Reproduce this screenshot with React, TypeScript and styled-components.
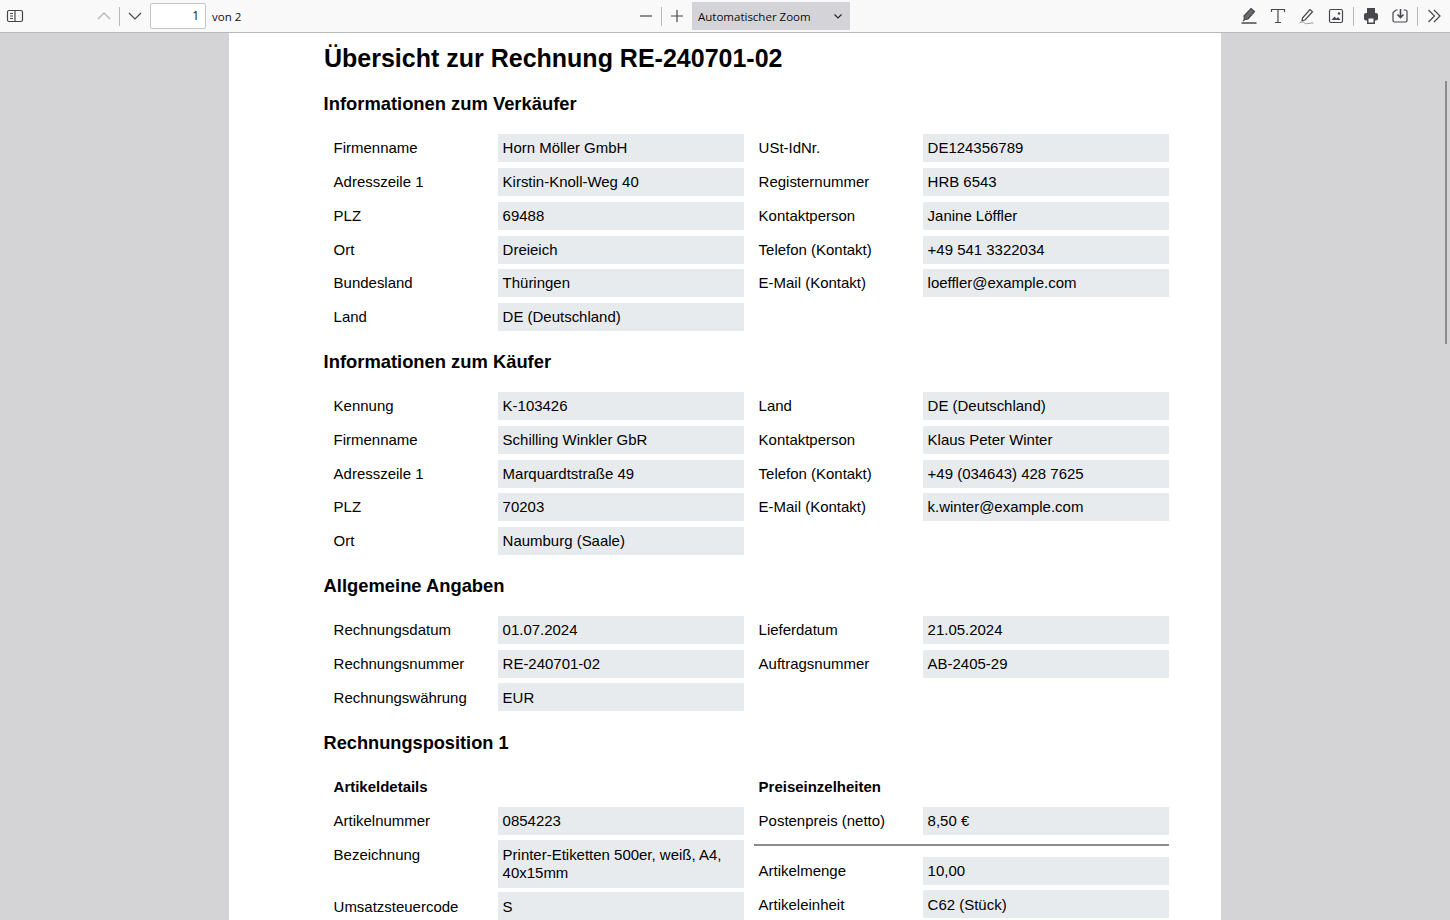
import { Fragment } from "react";
import styled, { createGlobalStyle } from "styled-components";

const GlobalStyle = createGlobalStyle`
  html, body {
    margin: 0;
    padding: 0;
    height: 100%;
    overflow: hidden;
    background: #d4d4d7;
  }
`

const Viewer = styled.div`
  position: relative;
  height: 920px;
  overflow: hidden;
  display: flex;
  flex-direction: column;
  background: #d4d4d7;
`

const Toolbar = styled.div`
  height: 32px;
  flex: none;
  display: flex;
  align-items: center;
  background: #f9f9fa;
  border-bottom: 1px solid #b8b8b8;
  font-family: "Open Sans", "Noto Sans", sans-serif;
  font-size: 11.5px;
  color: #0c0c0d;
`

const LeftGroup = styled.div`
  width: 632px;
  flex: none;
  display: flex;
  align-items: center;
  padding-left: 1px;
  box-sizing: border-box;
`

const CenterGroup = styled.div`
  display: flex;
  align-items: center;
`

const RightGroup = styled.div`
  margin-left: auto;
  margin-right: 2px;
  display: flex;
  align-items: center;
  gap: 1px;
`

const ToolButton = styled.div<{ $after?: number }>`
  width: 28px;
  height: 24px;
  flex: none;
  display: flex;
  align-items: center;
  justify-content: center;
  margin-right: ${(p) => p.$after ?? 0}px;
  svg {
    display: block;
  }
`

const Separator = styled.div<{ $left?: number; $right?: number }>`
  width: 1px;
  height: 19px;
  flex: none;
  background: #b9b9ba;
  margin: 0 ${(p) => p.$right ?? 1}px 0 ${(p) => p.$left ?? 1}px;
`

const PageInput = styled.div`
  width: 56px;
  height: 26px;
  box-sizing: border-box;
  margin-left: 1px;
  padding-right: 6px;
  border: 1px solid #c4c4c4;
  border-radius: 2px;
  background: #fff;
  text-align: right;
  line-height: 24px;
  font-size: 12px;
`

const PageCount = styled.span`
  margin-left: 6px;
`

const ZoomSelect = styled.div`
  width: 158px;
  height: 28px;
  box-sizing: border-box;
  margin-left: 1px;
  padding: 0 4px 0 6px;
  display: flex;
  align-items: center;
  justify-content: space-between;
  background: #d4d4d8;
`

const Page = styled.div`
  width: 992px;
  margin-left: 229px;
  flex: 1;
  box-sizing: border-box;
  padding: 0 52px 0 95px;
  background: #fff;
  color: #000;
  font-family: "Liberation Sans", Arial, sans-serif;
  font-size: 14.97px;
  line-height: 18px;
  overflow: hidden;
`

const Title = styled.h1`
  margin: 8px 0 0;
  font-size: 25px;
  line-height: 34px;
  font-weight: 700;
`

const SectionHeading = styled.h2<{ $top: number; $after?: number; $size?: number }>`
  margin: ${(p) => p.$top}px 0 ${(p) => p.$after ?? 19}px -0.4px;
  font-size: ${(p) => p.$size ?? 18.36}px;
  line-height: 22px;
  font-weight: 700;
`

const FieldGrid = styled.div`
  margin-left: 5px;
  display: grid;
  grid-template-columns: 169px 246px 10px 169px 246px;
  grid-auto-rows: minmax(28px, auto);
  row-gap: 5.75px;
`

const PositionColumns = styled.div`
  margin-left: 5px;
  display: grid;
  grid-template-columns: 415px 415px;
  column-gap: 10px;
  align-items: start;
`

const PositionColumn = styled.div<{ $gap: number }>`
  display: grid;
  grid-template-columns: 169px 246px;
  grid-auto-rows: auto;
  row-gap: ${(p) => p.$gap}px;
`

const SubHeading = styled.div<{ $after: number }>`
  grid-column: 1 / 3;
  height: 20px;
  margin-bottom: ${(p) => p.$after}px;
  padding-left: 4.6px;
  font-weight: 700;
  line-height: 20px;
`

const Label = styled.div<{ $col?: number; $top?: number }>`
  grid-column: ${(p) => p.$col ?? "auto"};
  padding: ${(p) => p.$top ?? 5.2}px 5px 0 4.6px;
`

const Value = styled.div<{ $col?: number; $top?: number; $bottom?: number }>`
  grid-column: ${(p) => p.$col ?? "auto"};
  min-height: 28px;
  padding: ${(p) => p.$top ?? 5.2}px 5px ${(p) => p.$bottom ?? 4.8}px 4.6px;
  box-sizing: border-box;
  background: #e8ebee;
`

const Divider = styled.div`
  grid-column: 1 / 3;
  height: 2px;
  margin: 3.7px 0 5.8px;
  background: #8c8c8c;
`

const ScrollThumb = styled.div`
  position: absolute;
  top: 81px;
  right: 3px;
  width: 2px;
  height: 263px;
  background: #8b8b8d;
`

const iconProps = {
  width: 18,
  height: 18,
  viewBox: "0 0 18 18",
  fill: "none",
  stroke: "#47474c",
  strokeWidth: 1.2,
};

type Row = [string, string];

const seller: [Row, Row | null][] = [
  [["Firmenname", "Horn Möller GmbH"], ["USt-IdNr.", "DE124356789"]],
  [["Adresszeile 1", "Kirstin-Knoll-Weg 40"], ["Registernummer", "HRB 6543"]],
  [["PLZ", "69488"], ["Kontaktperson", "Janine Löffler"]],
  [["Ort", "Dreieich"], ["Telefon (Kontakt)", "+49 541 3322034"]],
  [["Bundesland", "Thüringen"], ["E-Mail (Kontakt)", "loeffler@example.com"]],
  [["Land", "DE (Deutschland)"], null],
];

const buyer: [Row, Row | null][] = [
  [["Kennung", "K-103426"], ["Land", "DE (Deutschland)"]],
  [["Firmenname", "Schilling Winkler GbR"], ["Kontaktperson", "Klaus Peter Winter"]],
  [["Adresszeile 1", "Marquardtstraße 49"], ["Telefon (Kontakt)", "+49 (034643) 428 7625"]],
  [["PLZ", "70203"], ["E-Mail (Kontakt)", "k.winter@example.com"]],
  [["Ort", "Naumburg (Saale)"], null],
];

const general: [Row, Row | null][] = [
  [["Rechnungsdatum", "01.07.2024"], ["Lieferdatum", "21.05.2024"]],
  [["Rechnungsnummer", "RE-240701-02"], ["Auftragsnummer", "AB-2405-29"]],
  [["Rechnungswährung", "EUR"], null],
];

const Fields = ({ rows }: { rows: [Row, Row | null][] }) => (
  <FieldGrid>
    {rows.map(([left, right]) => (
      <Fragment key={left[0]}>
        <Label $col={1}>{left[0]}</Label>
        <Value $col={2}>{left[1]}</Value>
        {right && <Label $col={4}>{right[0]}</Label>}
        {right && <Value $col={5}>{right[1]}</Value>}
      </Fragment>
    ))}
  </FieldGrid>
);

const App = () => {
  return (
    <Viewer>
      <GlobalStyle />
      <Toolbar>
        <LeftGroup>
          <ToolButton $after={61}>
            <svg {...iconProps}>
              <rect x="1.500" y="3.500" width="15" height="11" rx="1.500" />
              <path d="M9 3.500v11" />
              <path d="M4 6.500h3M4 9h3M4 11.500h3" />
            </svg>
          </ToolButton>
          <ToolButton>
            <svg {...iconProps} stroke="#b1b1b3">
              <path d="M3 12l6-6 6 6" />
            </svg>
          </ToolButton>
          <Separator />
          <ToolButton>
            <svg {...iconProps}>
              <path d="M3 6l6 6 6-6" />
            </svg>
          </ToolButton>
          <PageInput>1</PageInput>
          <PageCount>von 2</PageCount>
        </LeftGroup>
        <CenterGroup>
          <ToolButton>
            <svg {...iconProps}>
              <path d="M3 9h12" />
            </svg>
          </ToolButton>
          <Separator />
          <ToolButton>
            <svg {...iconProps}>
              <path d="M3 9h12M9 3v12" />
            </svg>
          </ToolButton>
          <ZoomSelect>
            Automatischer Zoom
            <svg width="16" height="16" viewBox="0 0 16 16" fill="none" stroke="#2a2a2e" strokeWidth="1.2">
              <path d="M4.500 6.500l3.500 3.500 3.500-3.500" />
            </svg>
          </ZoomSelect>
        </CenterGroup>
        <RightGroup>
          <ToolButton>
            <svg {...iconProps}>
              <path d="M11 1.500l3.500 3-6.500 7.500-3.500.5-.5-3.500z" fill="#6a6a6e" />
              <path d="M4.500 12.500L3 14" />
              <path d="M1.500 16h15" strokeWidth="1.500" />
            </svg>
          </ToolButton>
          <ToolButton>
            <svg {...iconProps}>
              <path d="M2.500 5V2.500h13V5M9 2.500v13M6 15.500h6" />
            </svg>
          </ToolButton>
          <ToolButton>
            <svg {...iconProps}>
              <path d="M4.500 11l7.500-8.500 2.500 2.200-7.500 8.300-3 .8z" />
              <path d="M1.500 16c2-1.500 3.500-1.500 5 0s4 0 9 0" strokeWidth="0.900" stroke="#8c8c8f" />
            </svg>
          </ToolButton>
          <ToolButton>
            <svg {...iconProps}>
              <rect x="2.500" y="2.500" width="13" height="13" rx="1.500" />
              <path d="M4.500 13l3-3.500 2 2 1.500-1.500 2.500 3z" fill="#47474c" stroke="none" />
              <circle cx="12" cy="6.500" r="1.200" fill="#47474c" stroke="none" />
            </svg>
          </ToolButton>
          <Separator $left={2} $right={2} />
          <ToolButton>
            <svg {...iconProps} stroke="none" fill="#47474c">
              <path d="M5 1h8v5H5z" />
              <rect x="2" y="6" width="14" height="7.500" rx="2" />
              <rect x="5" y="10" width="8" height="7" />
              <rect x="6.500" y="11.500" width="5" height="4" fill="#f9f9fa" />
            </svg>
          </ToolButton>
          <ToolButton>
            <svg {...iconProps}>
              <path d="M6.500 3H5L2 5.500v8A1.500 1.500 0 0 0 3.500 15h11a1.500 1.500 0 0 0 1.500-1.500v-9A1.500 1.500 0 0 0 14.500 3H12.500" />
              <path d="M9.500 2v8M6.500 7.500l3 3 3-3" strokeWidth="1.600" />
            </svg>
          </ToolButton>
          <Separator $left={2} />
          <ToolButton>
            <svg {...iconProps}>
              <path d="M3.500 3l6 6-6 6M9 3l6 6-6 6" />
            </svg>
          </ToolButton>
        </RightGroup>
      </Toolbar>
      <Page>
        <Title>Übersicht zur Rechnung RE-240701-02</Title>
        <SectionHeading $top={18.25}>Informationen zum Verkäufer</SectionHeading>
        <Fields rows={seller} />
        <SectionHeading $top={20.05}>Informationen zum Käufer</SectionHeading>
        <Fields rows={buyer} />
        <SectionHeading $top={19.8}>Allgemeine Angaben</SectionHeading>
        <Fields rows={general} />
        <SectionHeading $top={20.65} $after={23} $size={18.2}>Rechnungsposition 1</SectionHeading>
        <PositionColumns>
          <PositionColumn $gap={4.6}>
            <SubHeading $after={5.4}>Artikeldetails</SubHeading>
            <Label>Artikelnummer</Label>
            <Value>0854223</Value>
            <Label $top={6.4}>Bezeichnung</Label>
            <Value $top={6.4} $bottom={5.6}>Printer-Etiketten 500er, weiß, A4, 40x15mm</Value>
            <Label $top={5.8}>Umsatzsteuercode</Label>
            <Value $top={5.8} $bottom={4.2}>S</Value>
          </PositionColumn>
          <PositionColumn $gap={5.3}>
            <SubHeading $after={4.7}>Preiseinzelheiten</SubHeading>
            <Label>Postenpreis (netto)</Label>
            <Value>8,50 €</Value>
            <Divider />
            <Label>Artikelmenge</Label>
            <Value>10,00</Value>
            <Label>Artikeleinheit</Label>
            <Value>C62 (Stück)</Value>
          </PositionColumn>
        </PositionColumns>
      </Page>
      <ScrollThumb />
    </Viewer>
  );
};

export default App;
